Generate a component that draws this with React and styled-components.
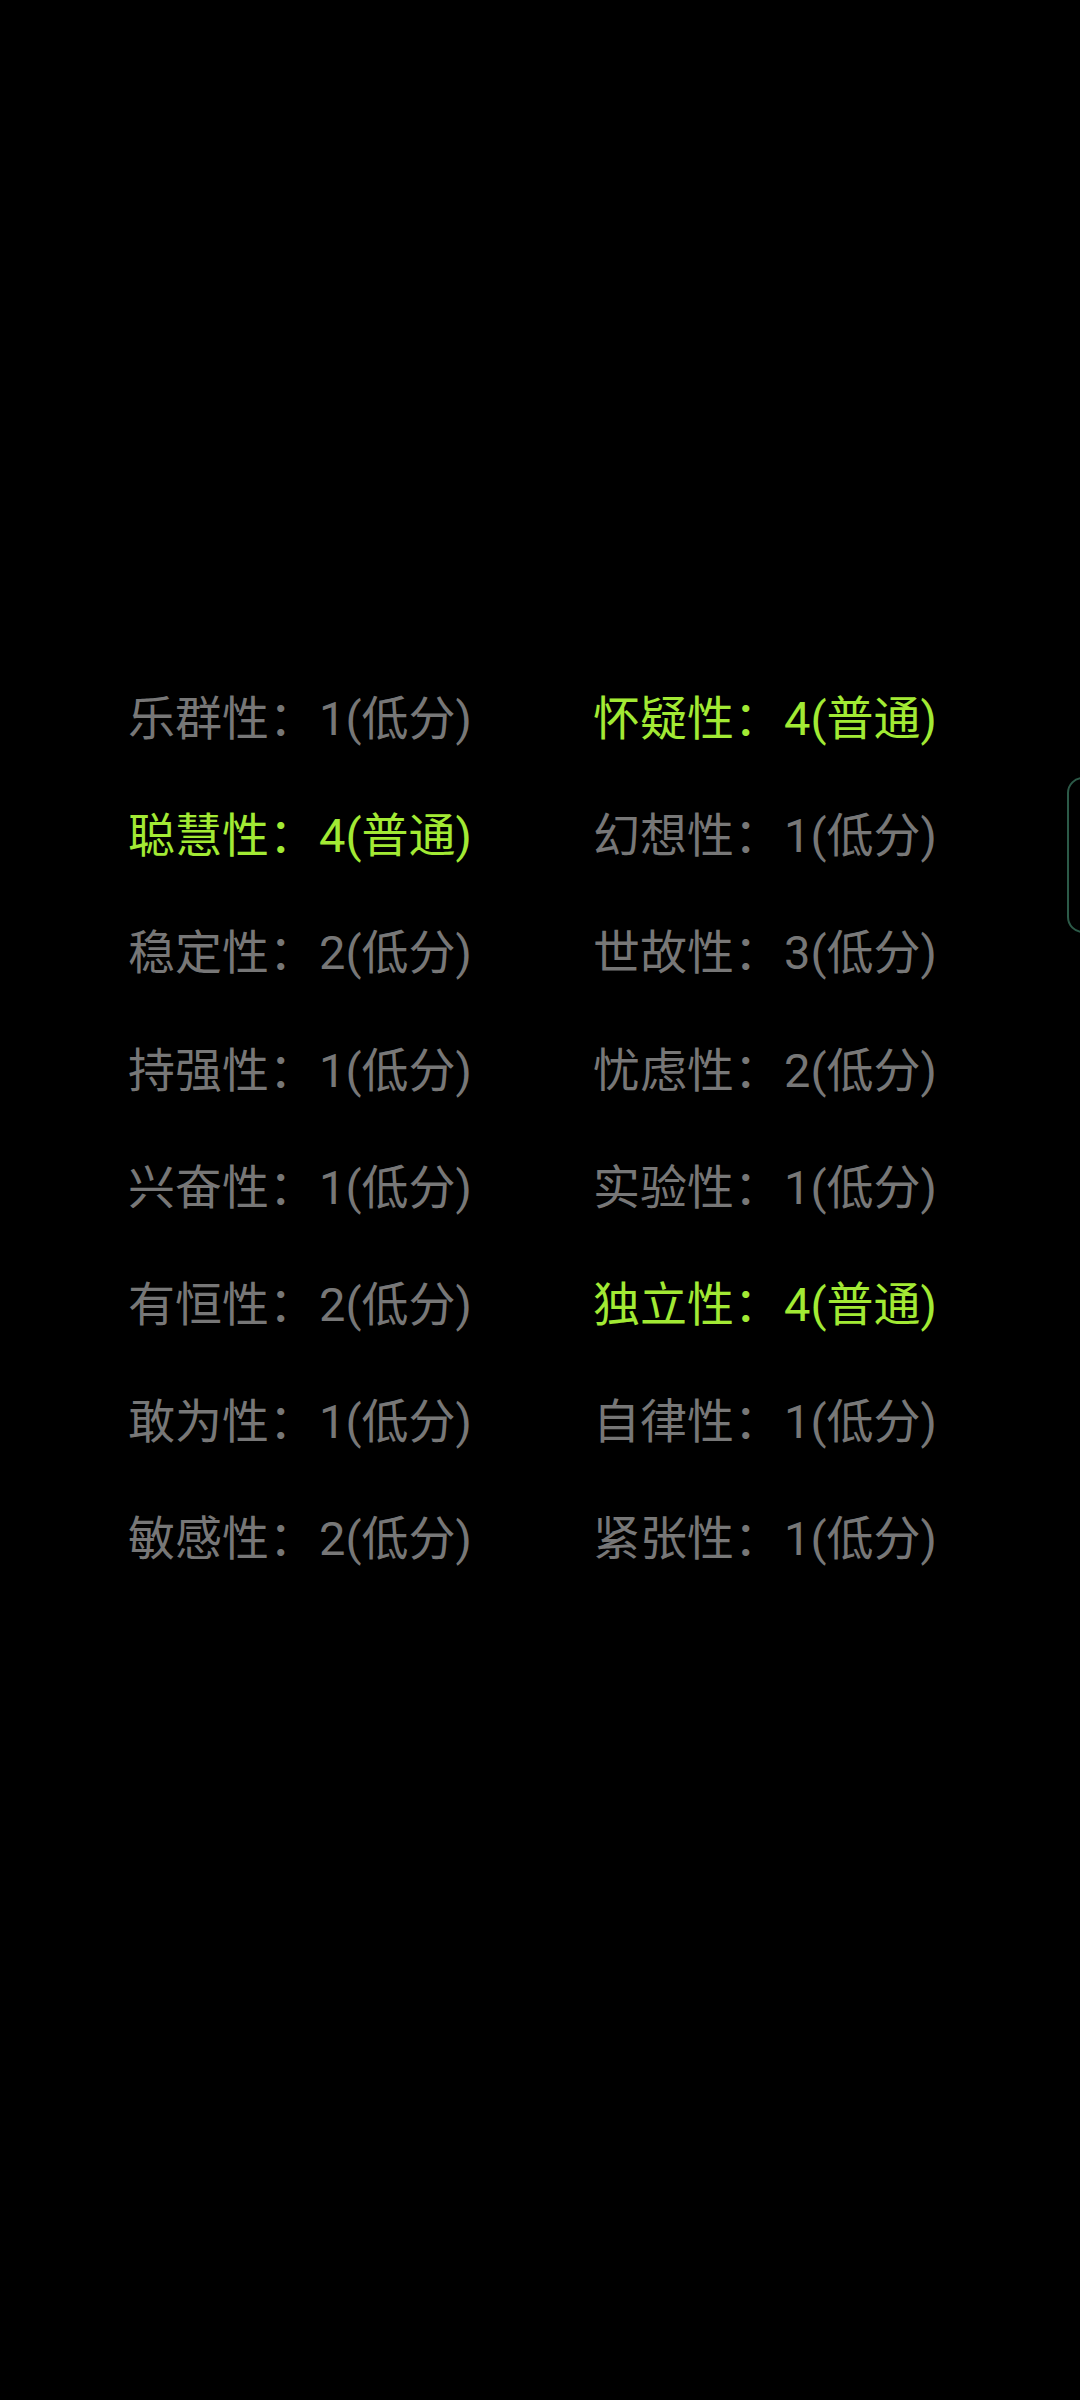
import React from "react";
import styled, { createGlobalStyle } from "styled-components";

const Global = createGlobalStyle`
  html, body { margin: 0; padding: 0; background: #000; }
  body { font-family: Roboto, "Noto Sans CJK SC", sans-serif; overflow: hidden; }
`;

const Screen = styled.div`
  position: relative;
  width: 1080px;
  height: 2400px;
  background: #000;
  overflow: hidden;
  box-sizing: border-box;
  padding: 660px 0 0 128px;
`;

const Grid = styled.div`
  display: grid;
  grid-template-columns: 465px 1fr;
  grid-auto-rows: 117.2px;
  align-items: center;
`;

const Item = styled.div`
  font-family: Roboto, "Noto Sans CJK SC", sans-serif;
  font-size: 47px;
  line-height: 1;
  white-space: nowrap;
  color: ${(p) => (p.$hi ? "#a2ea34" : "#777777")};
`;

const Value = styled.span`
  margin-left: 3px;
`;

const EdgeTab = styled.div`
  position: absolute;
  left: 1067px;
  top: 777px;
  width: 40px;
  height: 156px;
  border: 2px solid #2c5a48;
  border-radius: 16px;
  box-sizing: border-box;
`;

const rows = [
  ["乐群性", "1(低分)", false, "怀疑性", "4(普通)", true],
  ["聪慧性", "4(普通)", true, "幻想性", "1(低分)", false],
  ["稳定性", "2(低分)", false, "世故性", "3(低分)", false],
  ["持强性", "1(低分)", false, "忧虑性", "2(低分)", false],
  ["兴奋性", "1(低分)", false, "实验性", "1(低分)", false],
  ["有恒性", "2(低分)", false, "独立性", "4(普通)", true],
  ["敢为性", "1(低分)", false, "自律性", "1(低分)", false],
  ["敏感性", "2(低分)", false, "紧张性", "1(低分)", false],
];

export default function App() {
  return (
    <>
      <Global />
      <Screen>
        <Grid>
          {rows.map((r, i) => (
            <React.Fragment key={i}>
              <Item $hi={r[2]}>{r[0]}：<Value>{r[1]}</Value></Item>
              <Item $hi={r[5]}>{r[3]}：<Value>{r[4]}</Value></Item>
            </React.Fragment>
          ))}
        </Grid>
        <EdgeTab />
      </Screen>
    </>
  );
}
